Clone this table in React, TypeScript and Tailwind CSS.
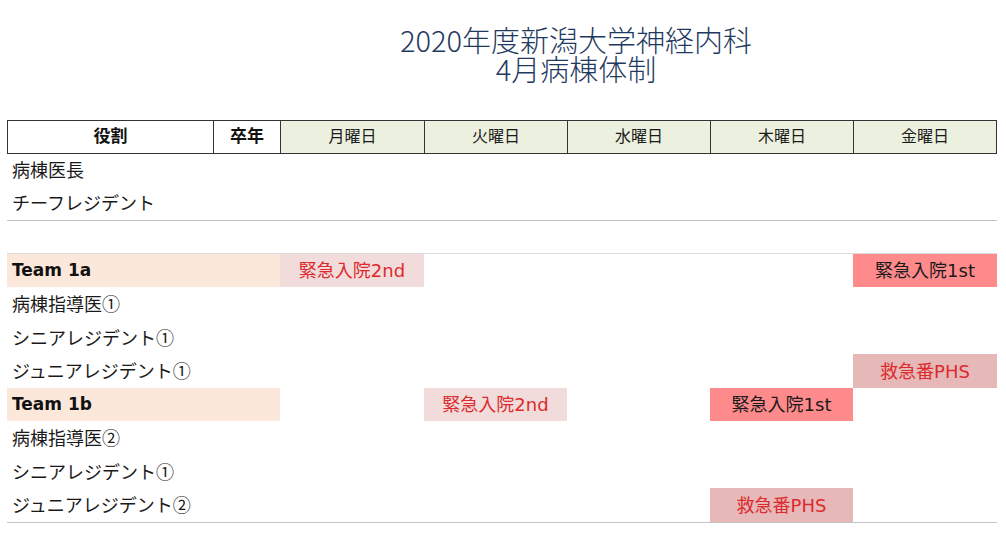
import React from "react";

const cols = "grid grid-cols-[206px_67px_144px_143px_143px_143px_144px]";

type Cell = { text: string; kind: "2nd" | "1st" | "phs" } | null;

const kindClass: Record<string, string> = {
  "2nd": "bg-[#f2dcdb] text-[#dc2a2e]",
  "1st": "bg-[#ff8a8c] text-[#1a1a1a]",
  phs: "bg-[#e6b8b7] text-[#dc2a2e]",
};

const cjk = { fontFamily: '"Noto Sans CJK JP", sans-serif' };

function Label({ text }: { text: string }) {
  const last = text.slice(-1);
  if (last === "①" || last === "②") {
    return (
      <span>
        {text.slice(0, -1)}
        <span style={cjk}>{last}</span>
      </span>
    );
  }
  return <span>{text}</span>;
}

function Row({
  label,
  team,
  cells,
  h,
}: {
  label: string;
  team?: boolean;
  cells?: Cell[];
  h: string;
}) {
  const c: Cell[] = cells ?? [null, null, null, null, null];
  return (
    <div className={`${cols} ${h}`}>
      <div
        className={`col-span-2 flex items-center pl-[5px] ${
          team ? "bg-[#fce8db] font-bold text-[17px] text-[#111]" : "text-[18px] text-[#1a1a1a]"
        }`}
      >
        <Label text={label} />
      </div>
      {c.map((cell, i) => (
        <div
          key={i}
          className={`flex items-center justify-center text-[18px] ${cell ? kindClass[cell.kind] : ""}`}
        >
          {cell ? cell.text : ""}
        </div>
      ))}
    </div>
  );
}

export default function App() {
  const days = ["月曜日", "火曜日", "水曜日", "木曜日", "金曜日"];
  return (
    <div
      className="w-[1006px] h-[543px] bg-white overflow-hidden"
      style={{ fontFamily: '"DejaVu Sans", "Noto Sans CJK JP", sans-serif' }}
    >
      <div
        className="flex flex-col items-center pl-[146px] pt-[25px] text-[29px] leading-[29px] font-light text-[#1f3a60]"
        style={cjk}
      >
        <div>2020年度新潟大学神経内科</div>
        <div>4月病棟体制</div>
      </div>
      <div className="ml-[7px] mt-[37px] w-[990px]">
        <div className={`${cols} h-[34px] border-y border-[#333]`}>
          <div className="flex items-center justify-center border-l border-[#333] font-bold text-[17px] text-[#111]">
            役割
          </div>
          <div className="flex items-center justify-center border-l border-[#333] font-bold text-[17px] text-[#111]">
            卒年
          </div>
          {days.map((d, i) => (
            <div
              key={d}
              className={`flex items-center justify-center border-l border-[#333] bg-[#ebf1de] text-[16px] text-[#1a1a1a] ${
                i === 4 ? "border-r" : ""
              }`}
            >
              {d}
            </div>
          ))}
        </div>
        <Row label="病棟医長" h="h-[33px]" />
        <Row label="チーフレジデント" h="h-[33px]" />
        <div className="h-[34px] border-t border-b border-t-[#c4c4c4] border-b-[#dcdcdc]" />
        <Row
          label="Team 1a"
          team
          h="h-[33px]"
          cells={[{ text: "緊急入院2nd", kind: "2nd" }, null, null, null, { text: "緊急入院1st", kind: "1st" }]}
        />
        <Row label="病棟指導医①" h="h-[34px]" />
        <Row label="シニアレジデント①" h="h-[33px]" />
        <Row
          label="ジュニアレジデント①"
          h="h-[34px]"
          cells={[null, null, null, null, { text: "救急番PHS", kind: "phs" }]}
        />
        <Row
          label="Team 1b"
          team
          h="h-[33px]"
          cells={[null, { text: "緊急入院2nd", kind: "2nd" }, null, { text: "緊急入院1st", kind: "1st" }, null]}
        />
        <Row label="病棟指導医②" h="h-[34px]" />
        <Row label="シニアレジデント①" h="h-[33px]" />
        <Row
          label="ジュニアレジデント②"
          h="h-[34px]"
          cells={[null, null, null, { text: "救急番PHS", kind: "phs" }, null]}
        />
        <div className="border-t border-[#c4c4c4]" />
      </div>
    </div>
  );
}
